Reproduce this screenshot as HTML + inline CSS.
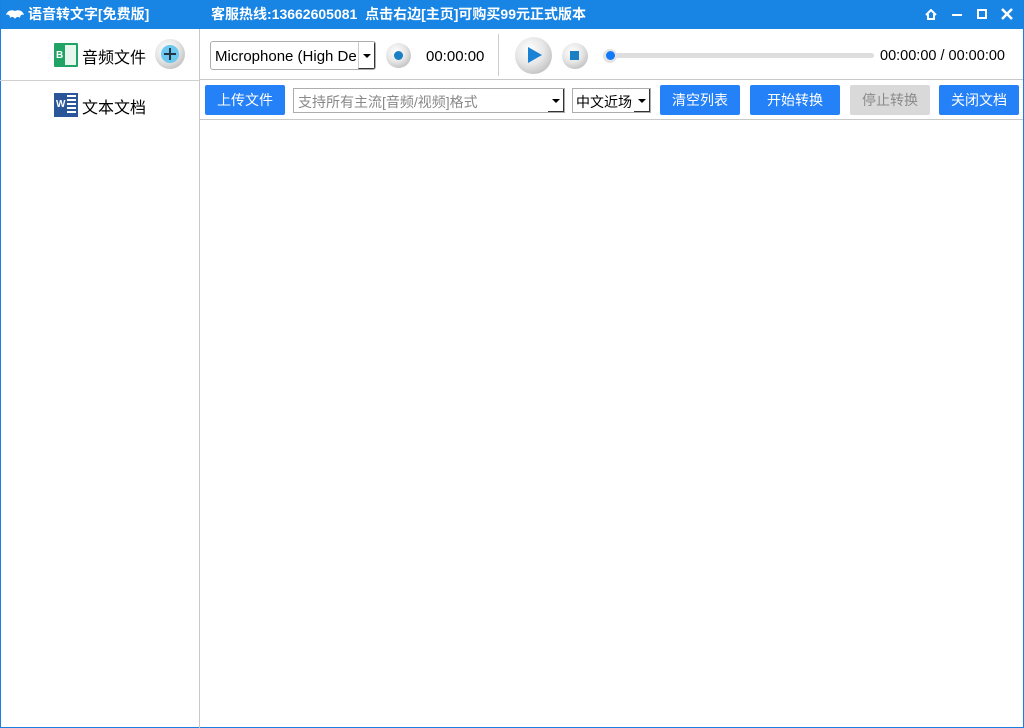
<!DOCTYPE html>
<html><head><meta charset="utf-8"><style>
*{box-sizing:border-box;margin:0;padding:0}
body{width:1024px;height:728px;overflow:hidden;background:#fff;font-family:"Liberation Sans","Microsoft YaHei","Noto Sans CJK SC",sans-serif;position:relative}
.win{position:absolute;left:0;top:0;width:1024px;height:728px;border:1px solid #1a7fe0;border-top:none}
.title{position:absolute;left:0;top:0;width:1024px;height:29px;background:#1884e3;color:#fff;font-weight:bold;font-size:14px;line-height:29px}
.abs{position:absolute}
.side{position:absolute;left:0;top:29px;width:200px;height:699px;border-right:1px solid #c8c8c8}
.btn{position:absolute;top:85px;height:30px;background:#2581f7;color:#fff;font-size:14px;line-height:30px;text-align:center;border-radius:2px}
.gb{position:absolute;border-radius:50%;background:radial-gradient(circle at 40% 35%,#fff 0%,#e6e6e6 45%,#a9a9a9 100%)}
.t14{font-size:15px;color:#000}
</style></head><body>
<div class="title">
 <svg class="abs" style="left:5px;top:9px" width="20" height="11"><path d="M10 2C6 0 2 2 1 6C3 5 5 6 5 9C7 7 9 8 10 10C11 8 13 7 15 9C15 6 17 5 19 6C18 2 14 0 10 2Z" fill="#fff"/></svg>
 <span class="abs" style="left:28px;top:0">语音转文字[免费版]</span>
 <span class="abs" style="left:211px;top:0">客服热线:13662605081&nbsp;&nbsp;点击右边[主页]可购买99元正式版本</span>
 <svg class="abs" style="left:925px;top:9px" width="12" height="11"><path d="M1 6L6 1L11 6M3 5V10H9V5" stroke="#fff" stroke-width="2" fill="none"/></svg>
 <div class="abs" style="left:952px;top:14px;width:10px;height:2px;background:#fff"></div>
 <div class="abs" style="left:977px;top:9px;width:10px;height:10px;border:2px solid #fff"></div>
 <svg class="abs" style="left:1001px;top:8px" width="12" height="12"><path d="M1 1L11 11M11 1L1 11" stroke="#fff" stroke-width="2.5"/></svg>
</div>
<div class="win"></div>
<div class="side">
 <div class="abs" style="left:54px;top:14px;width:24px;height:24px;background:#21a366;border-radius:1px"></div>
 <div class="abs" style="left:56px;top:21px;color:#fff;font-size:10px;font-weight:bold">B</div>
 <div class="abs" style="left:65px;top:16px;width:11px;height:20px;background:#e8f7ee"></div>
 <div class="abs" style="left:82px;top:15px;font-size:16px;color:#000">音频文件</div>
 <div class="gb" style="left:155px;top:10px;width:30px;height:30px"></div>
 <div class="abs" style="left:161px;top:16px;width:18px;height:18px;border-radius:50%;background:#6cc8ee"></div>
 <div class="abs" style="left:164px;top:24px;width:12px;height:2px;background:#234"></div>
 <div class="abs" style="left:169px;top:19px;width:2px;height:12px;background:#234"></div>
 <div class="abs" style="left:0;top:51px;width:199px;height:1px;background:#d0d0d0"></div>
 <div class="abs" style="left:54px;top:64px;width:24px;height:24px;background:#2b579a"></div>
 <div class="abs" style="left:56px;top:70px;color:#fff;font-size:10px;font-weight:bold">W</div>
 <div class="abs" style="left:67px;top:66px;width:9px;height:20px;background:repeating-linear-gradient(#fff 0 2px,#2b579a 2px 4px)"></div>
 <div class="abs" style="left:82px;top:65px;font-size:16px;color:#000">文本文档</div>
</div>
<!-- row 1 -->
<div class="abs" style="left:210px;top:41px;width:166px;height:29px;border:1px solid #adadad;border-radius:3px;background:#fff;overflow:hidden">
 <span class="abs t14" style="left:4px;top:6px;white-space:nowrap;width:142px;overflow:hidden">Microphone (High Definition</span>
 <div class="abs" style="left:147px;top:0;width:17px;height:27px;background:#fff;border-left:1px solid #ccc;border-right:1px solid #333;border-bottom:1px solid #333"></div>
 <div class="abs" style="left:152px;top:12px;border:4px solid transparent;border-top:4px solid #000;border-bottom:none"></div>
</div>
<div class="gb" style="left:386px;top:43px;width:25px;height:25px"></div>
<div class="abs" style="left:394px;top:51px;width:9px;height:9px;border-radius:50%;background:#1b7fc4"></div>
<div class="abs t14" style="left:426px;top:48px">00:00:00</div>
<div class="abs" style="left:498px;top:34px;width:1px;height:42px;background:#ccc"></div>
<div class="gb" style="left:515px;top:37px;width:37px;height:37px"></div>
<svg class="abs" style="left:527px;top:46px" width="16" height="18"><path d="M1 1L15 9L1 17Z" fill="#1a82d4"/></svg>
<div class="gb" style="left:562px;top:43px;width:26px;height:26px"></div>
<div class="abs" style="left:570px;top:51px;width:9px;height:9px;background:#1b7fc4"></div>
<div class="abs" style="left:607px;top:53px;width:267px;height:5px;background:#dedede;border-radius:3px"></div>
<div class="abs" style="left:603px;top:49px;width:14px;height:14px;border-radius:50%;background:#e4e4e4"></div>
<div class="abs" style="left:606px;top:51px;width:9px;height:9px;border-radius:50%;background:#1479f7"></div>
<div class="abs t14" style="left:880px;top:48px;font-size:14.5px">00:00:00 / 00:00:00</div>
<div class="abs" style="left:200px;top:79px;width:823px;height:1px;background:#c8c8c8"></div>
<!-- row 2 -->
<div class="btn" style="left:205px;width:80px">上传文件</div>
<div class="abs" style="left:293px;top:88px;width:272px;height:25px;border:1px solid #adadad;background:#fff">
 <span class="abs" style="left:4px;top:3px;font-size:14px;color:#888">支持所有主流[音频/视频]格式</span>
 <div class="abs" style="left:254px;top:0;width:16px;height:23px;border-right:1px solid #333;border-bottom:1px solid #333"></div>
 <div class="abs" style="left:258px;top:10px;border:4px solid transparent;border-top:4px solid #000;border-bottom:none"></div>
</div>
<div class="abs" style="left:572px;top:88px;width:79px;height:25px;border:1px solid #adadad;background:#fff">
 <span class="abs" style="left:3px;top:3px;font-size:14px;color:#000">中文近场</span>
 <div class="abs" style="left:61px;top:0;width:16px;height:23px;border-right:1px solid #333;border-bottom:1px solid #333"></div>
 <div class="abs" style="left:65px;top:10px;border:4px solid transparent;border-top:4px solid #000;border-bottom:none"></div>
</div>
<div class="btn" style="left:660px;width:80px">清空列表</div>
<div class="btn" style="left:750px;width:90px">开始转换</div>
<div class="btn" style="left:850px;width:80px;background:#d9d9d9;color:#8a8a8a">停止转换</div>
<div class="btn" style="left:939px;width:80px">关闭文档</div>
<div class="abs" style="left:200px;top:119px;width:823px;height:1px;background:#c8c8c8"></div>
</body></html>
